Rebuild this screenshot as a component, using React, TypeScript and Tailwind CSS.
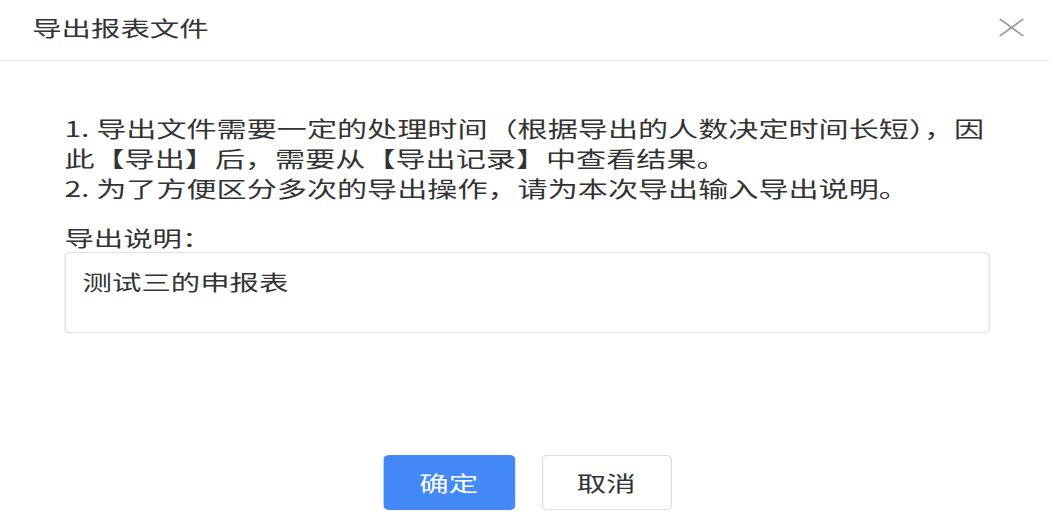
import React from 'react';

const font = { fontFamily: '"Noto Sans CJK SC", "Noto Sans", sans-serif' };

export default function App() {
  return (
    <div className="w-[1062px] h-[526px] overflow-hidden bg-white text-[#333]" style={font}>
      {/* the reference is stretched horizontally, so the dialog is drawn narrow and widened */}
      <div className="w-[750px] origin-top-left scale-x-[1.4]">
        <div className="h-[61px] border-b border-[#e8e8e8] flex items-start justify-between pl-[23px] pr-[17px] pt-[12px]">
          <span className="text-[21px] leading-[30px]">导出报表文件</span>
          <svg width="21" height="21" viewBox="0 0 20 20" className="mt-[5px]">
            <path d="M2 2 L18 18 M18 2 L2 18" stroke="#9a9a9a" strokeWidth="1.4" fill="none" />
          </svg>
        </div>

        <div className="pl-[46px] pr-[43px] pt-[52px]">
          <p className="text-[21.5px] leading-[30px] -mr-[10px]">
            1. 导出文件需要一定的处理时间（根据导出的人数决定时间长短），因此【导出】后，需要从【导出记录】中查看结果。
            <br />
            2. 为了方便区分多次的导出操作，请为本次导出输入导出说明。
          </p>
          <div className="mt-[19px] text-[21px] leading-[30px]">导出说明：</div>
          <div className="h-[81px] border border-[#dcdfe6] rounded-[4px] px-[12px] py-[13px] text-[21px] leading-[30px]">
            测试三的申报表
          </div>

          <div className="mt-[122px] flex justify-center gap-[19px]">
            <button className="w-[94px] h-[55px] rounded-[4px] bg-[#4388f6] text-white text-[21px]">确定</button>
            <button className="w-[93px] h-[55px] rounded-[4px] border border-[#dcdfe6] bg-white text-[#333] text-[21px]">取消</button>
          </div>
        </div>
      </div>
    </div>
  );
}
